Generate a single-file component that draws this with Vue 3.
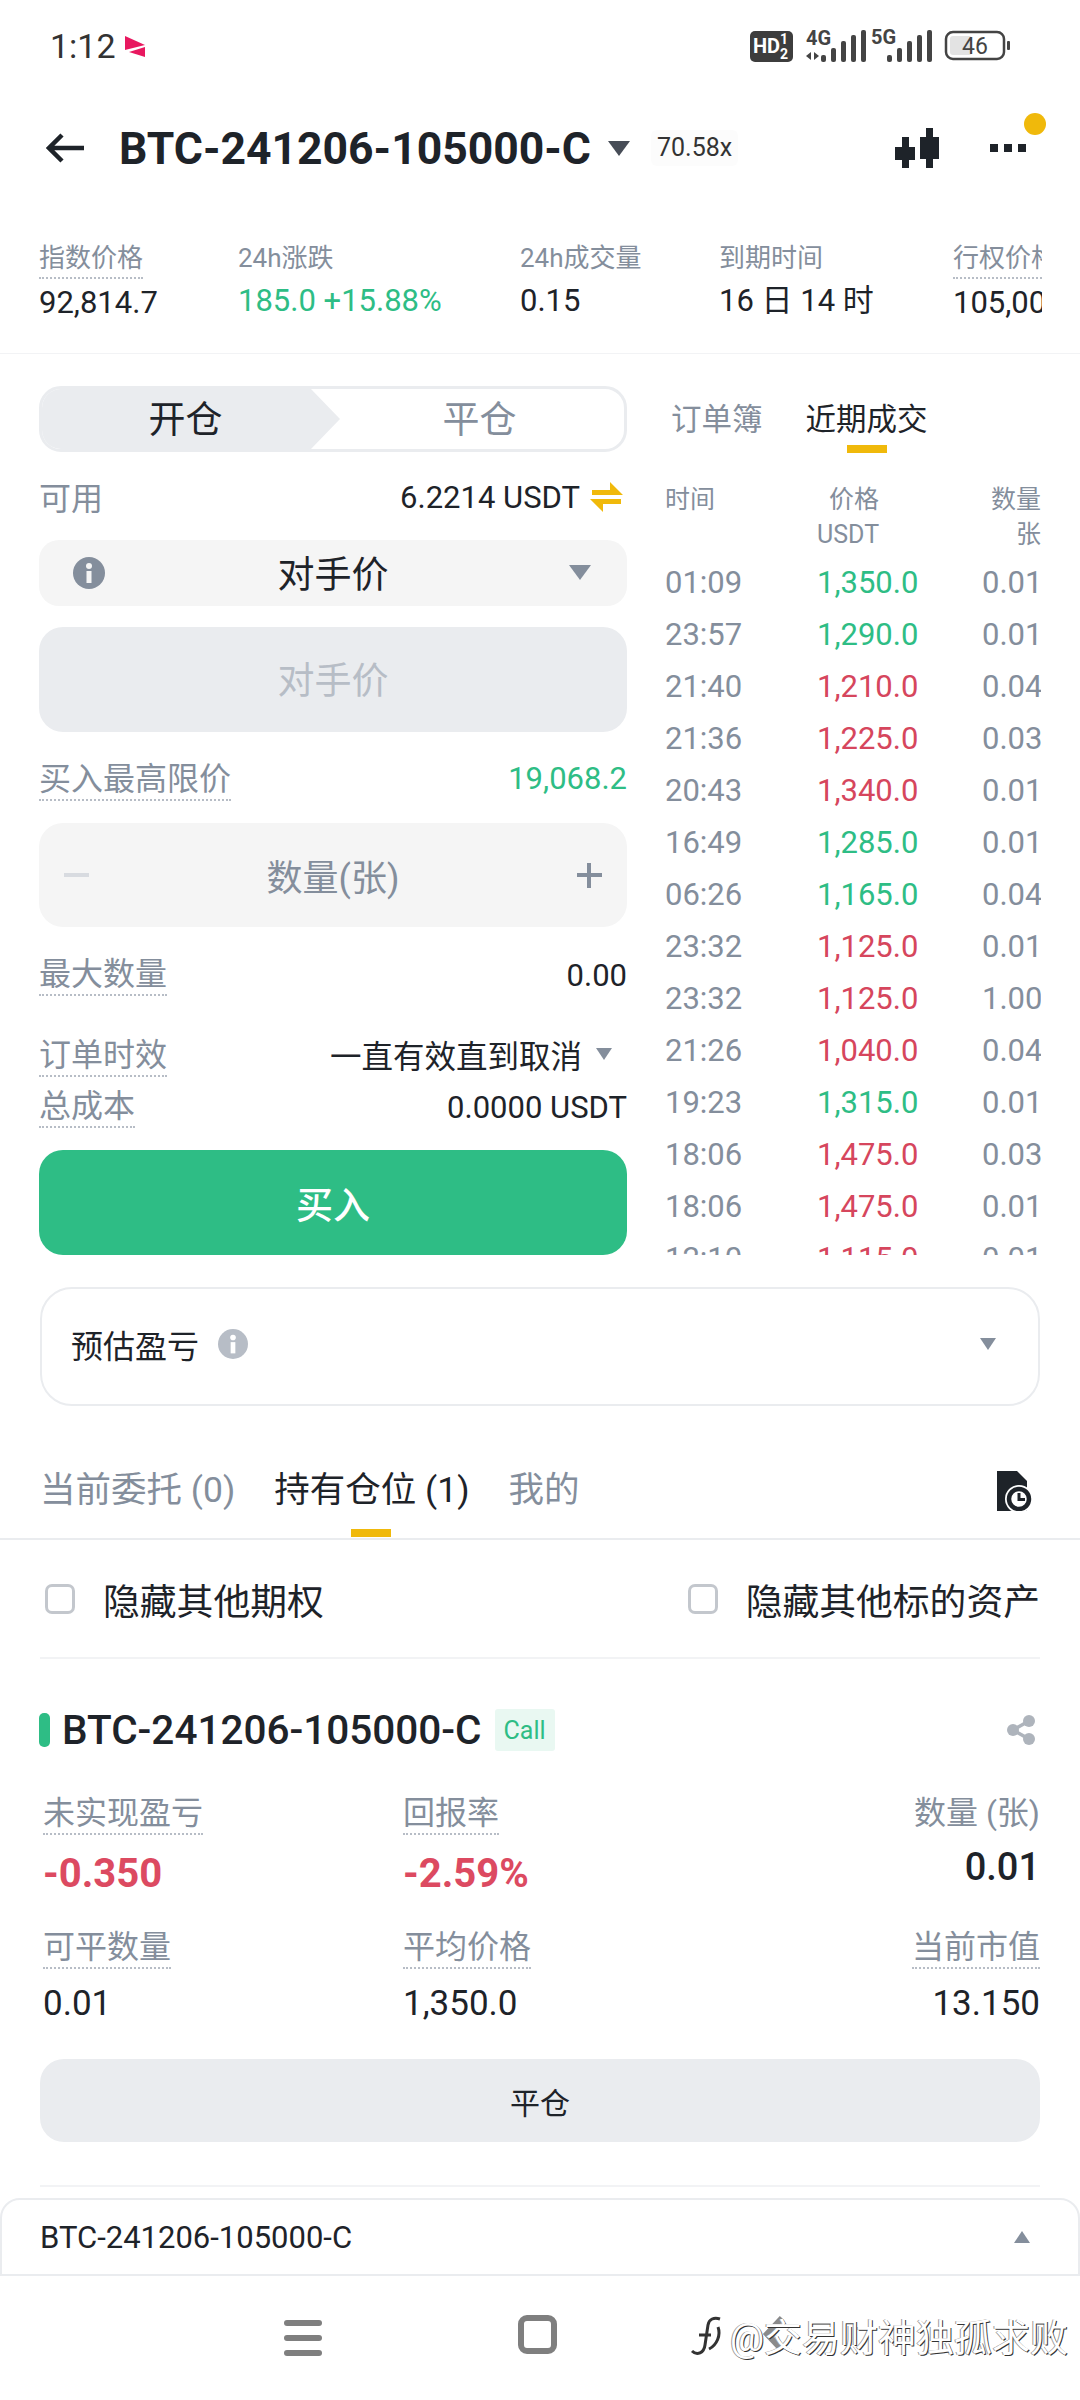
<template>
  <div class="page">
    <div class="status-bar">
      <span class="clock">1:12</span>
      <svg class="app-mark" viewBox="0 0 21 21">
        <path d="M0 0L20 9L0 14Z" fill="#e8185f" />
        <path d="M20 11V21L4 16Z" fill="#e8185f" />
      </svg>
      <svg class="status-icons" viewBox="0 -6 270 46">
        <rect x="0" y="1" width="43" height="31" rx="5" fill="#3d3d3d" />
        <text x="3" y="23" class="hd">HD</text>
        <text x="30" y="14" class="hd-sm">1</text>
        <text x="30" y="29" class="hd-sm">2</text>
        <text x="56" y="15" class="net">4G</text>
        <text x="121" y="14" class="net">5G</text>
        <path d="M56 26l5-4v8zM64 22l5 4-5 4z" fill="#444" />
        <rect v-for="(b, i) in signal" :key="'a' + i" :x="b.x + 71" :y="32 - b.h" width="5" :height="b.h" rx="2" fill="#444" />
        <rect v-for="(b, i) in signal" :key="'b' + i" :x="b.x + 137" :y="32 - b.h" width="5" :height="b.h" rx="2" fill="#444" />
        <rect x="196" y="2" width="58" height="27" rx="7" fill="none" stroke="#444" stroke-width="2.5" />
        <rect x="200" y="6" width="22" height="19" rx="3" fill="#e3e3e3" />
        <text x="212" y="24" class="batt">46</text>
        <rect x="257" y="11" width="3" height="9" rx="1" fill="#444" />
      </svg>
    </div>

    <header class="top-bar">
      <svg class="back" viewBox="0 0 40 32">
        <path d="M38 16H4M16 3L3 16L16 29" fill="none" stroke="#1e2329" stroke-width="4.5" />
      </svg>
      <h1 class="symbol">BTC-241206-105000-C</h1>
      <i class="caret big"></i>
      <span class="leverage">70.58x</span>
      <svg class="candles" viewBox="0 0 46 40">
        <path d="M7 9h7v10h6v13h-6v8H7v-8H0V19h7zM31 0h7v9h6v22h-6v9h-7v-9h-6V9h6z" fill="#1e2329" />
      </svg>
      <div class="more">
        <i></i><i></i><i></i>
        <b class="more-dot"></b>
      </div>
    </header>

    <section class="stats">
      <div class="stats-inner">
        <div v-for="s in stats" :key="s.label" class="stat">
          <span class="stat-label" :class="{ dotted: s.dotted }">{{ s.label }}</span>
          <span class="stat-value" :class="{ up: s.up }">{{ s.value }}</span>
        </div>
      </div>
    </section>

    <section class="trade">
      <div class="form">
        <div class="segment">
          <div class="seg-on">开仓</div>
          <div class="seg-off">平仓</div>
        </div>

        <div class="row avail">
          <span class="label">可用</span>
          <span class="avail-val">
            6.2214 USDT
            <svg class="transfer" viewBox="0 0 33 30">
              <path d="M2 8H20V0L33 13H2ZM31 17H0L13 30V22H31Z" fill="#f0b90b" />
            </svg>
          </span>
        </div>

        <div class="select">
          <svg class="info" viewBox="0 0 32 32">
            <circle cx="16" cy="16" r="16" fill="#848e9c" />
            <rect x="13.5" y="14" width="5" height="12" fill="#f5f5f5" />
            <circle cx="16" cy="9" r="3" fill="#f5f5f5" />
          </svg>
          <span>对手价</span>
          <i class="caret select-caret"></i>
        </div>

        <div class="disabled-input">对手价</div>

        <div class="row limit">
          <span class="label dotted">买入最高限价</span>
          <span class="limit-val">19,068.2</span>
        </div>

        <div class="qty">
          <i class="minus"></i>
          <span>数量(张)</span>
          <i class="plus"></i>
        </div>

        <div class="row max">
          <span class="label dotted">最大数量</span>
          <span class="plain-val">0.00</span>
        </div>

        <div class="row tif">
          <span class="label dotted">订单时效</span>
          <span class="tif-val">一直有效直到取消<i class="caret small"></i></span>
        </div>

        <div class="row cost">
          <span class="label dotted">总成本</span>
          <span class="plain-val">0.0000 USDT</span>
        </div>

        <button class="buy">买入</button>
      </div>

      <div class="book">
        <div class="book-tabs">
          <span>订单簿</span>
          <span class="active">近期成交</span>
        </div>
        <div class="book-head">
          <span class="head-cell">时间</span>
          <span class="head-cell price-head"><em>价格</em>USDT</span>
          <span class="head-cell qty-head">数量<br />张</span>
        </div>
        <div class="book-rows">
          <div v-for="(t, i) in trades" :key="i" class="book-row">
            <span>{{ t[0] }}</span>
            <span :class="t[3] ? 'up' : 'down'">{{ t[1] }}</span>
            <span>{{ t[2] }}</span>
          </div>
        </div>
      </div>
    </section>

    <div class="estimate">
      <span>预估盈亏</span>
      <svg class="info-sm" viewBox="0 0 32 32">
        <circle cx="16" cy="16" r="16" fill="#b7bdc6" />
        <rect x="13.5" y="14" width="5" height="12" fill="#fff" />
        <circle cx="16" cy="9" r="3" fill="#fff" />
      </svg>
      <i class="caret small estimate-caret"></i>
    </div>

    <nav class="tabs">
      <span>当前委托 (0)</span>
      <span class="active">持有仓位 (1)</span>
      <span>我的</span>
      <svg class="history" viewBox="0 0 36 40">
        <path d="M0 0H20L30 10V40H0Z" fill="#1e2329" />
        <circle cx="22" cy="28" r="14" fill="#fff" />
        <circle cx="22" cy="28" r="10" fill="none" stroke="#1e2329" stroke-width="4.5" />
        <path d="M22 22V28.5H28" fill="none" stroke="#1e2329" stroke-width="3" />
      </svg>
    </nav>

    <div class="filters">
      <label class="check"><i></i>隐藏其他期权</label>
      <label class="check"><i></i>隐藏其他标的资产</label>
    </div>

    <section class="position">
      <div class="pos-head">
        <i class="pos-bar"></i>
        <span class="pos-name">BTC-241206-105000-C</span>
        <span class="call">Call</span>
        <svg class="share" viewBox="0 0 28 30">
          <path d="M22 6L6 15L22 24" fill="none" stroke="#aeb4bc" stroke-width="3.5" />
          <circle cx="22" cy="6" r="6" fill="#aeb4bc" />
          <circle cx="6" cy="15" r="6" fill="#aeb4bc" />
          <circle cx="22" cy="24" r="6" fill="#aeb4bc" />
        </svg>
      </div>

      <div class="pos-grid">
        <div class="cell">
          <span class="label dotted">未实现盈亏</span>
          <span class="big-val down">-0.350</span>
        </div>
        <div class="cell">
          <span class="label dotted">回报率</span>
          <span class="big-val down">-2.59%</span>
        </div>
        <div class="cell right">
          <span class="label">数量 (张)</span>
          <span class="big-val dark">0.01</span>
        </div>
        <div class="cell second">
          <span class="label dotted">可平数量</span>
          <span class="mid-val">0.01</span>
        </div>
        <div class="cell second">
          <span class="label dotted">平均价格</span>
          <span class="mid-val">1,350.0</span>
        </div>
        <div class="cell second right">
          <span class="label dotted">当前市值</span>
          <span class="mid-val">13.150</span>
        </div>
      </div>

      <button class="close-btn">平仓</button>
    </section>

    <div class="sheet">
      <span>BTC-241206-105000-C</span>
      <i class="caret small flip"></i>
    </div>

    <div class="nav-bar">
      <div class="burger"><i></i><i></i><i></i></div>
      <div class="square"></div>
      <svg class="nav-back" viewBox="0 0 24 38">
        <path d="M20 3L5 19L20 35" fill="none" stroke="#8a8a8a" stroke-width="6" />
      </svg>
    </div>

    <div class="watermark">
      <svg class="wm-logo" viewBox="0 0 36 50">
        <path d="M4 38c5 5 12 2 13-6L20 12c1-6 6-8 12-6M30 14c3 8-1 18-9 22M11 22h12" fill="none" stroke="#333" stroke-width="3" />
      </svg>
      <span>@交易财神独孤求败</span>
    </div>
  </div>
</template>

<script setup>
const signal = [
  { x: 0, h: 7 },
  { x: 10, h: 14 },
  { x: 20, h: 21 },
  { x: 30, h: 27 },
  { x: 40, h: 32 }
]

const stats = [
  { label: '指数价格', value: '92,814.7', dotted: true },
  { label: '24h涨跌', value: '185.0 +15.88%', up: true },
  { label: '24h成交量', value: '0.15' },
  { label: '到期时间', value: '16 日 14 时' },
  { label: '行权价格', value: '105,000', dotted: true }
]

const trades = [
  ['01:09', '1,350.0', '0.01', true],
  ['23:57', '1,290.0', '0.01', true],
  ['21:40', '1,210.0', '0.04', false],
  ['21:36', '1,225.0', '0.03', false],
  ['20:43', '1,340.0', '0.01', false],
  ['16:49', '1,285.0', '0.01', true],
  ['06:26', '1,165.0', '0.04', true],
  ['23:32', '1,125.0', '0.01', false],
  ['23:32', '1,125.0', '1.00', false],
  ['21:26', '1,040.0', '0.04', false],
  ['19:23', '1,315.0', '0.01', true],
  ['18:06', '1,475.0', '0.03', false],
  ['18:06', '1,475.0', '0.01', false],
  ['12:10', '1,115.0', '0.01', false]
]
</script>

<style>
html, body {
  margin: 0;
  background: #fff;
}
</style>

<style scoped>
.page {
  position: relative;
  width: 1080px;
  height: 2400px;
  overflow: hidden;
  background: #fff;
  color: #1e2329;
  font-family: Roboto, "Noto Sans CJK SC", sans-serif;
}

i {
  display: block;
  font-style: normal;
}

.up { color: #2ebd85; }
.down { color: #dc4a61; }

.caret {
  width: 0;
  height: 0;
  border-left: 11px solid transparent;
  border-right: 11px solid transparent;
  border-top: 15px solid #474d57;
}

.caret.small {
  border-left-width: 8px;
  border-right-width: 8px;
  border-top: 12px solid #848e9c;
}

.caret.flip {
  transform: rotate(180deg);
}

/* status bar */
.status-bar {
  display: flex;
  align-items: center;
  height: 92px;
  padding: 0 68px 0 50px;
  box-sizing: border-box;
}

.clock {
  font-size: 34px;
  color: #333;
}

.app-mark {
  width: 21px;
  height: 21px;
  margin-left: 9px;
}

.status-icons {
  width: 270px;
  height: 46px;
  margin-left: auto;
  margin-top: 2px;
  margin-right: -8px;
}

.hd {
  font: 700 20px Roboto, sans-serif;
  fill: #fff;
}

.hd-sm {
  font: 700 14px Roboto, sans-serif;
  fill: #fff;
}

.net {
  font: 700 20px Roboto, sans-serif;
  fill: #444;
}

.batt {
  font: 400 23px Roboto, sans-serif;
  fill: #444;
}

/* header */
.top-bar {
  display: flex;
  align-items: center;
  height: 112px;
  padding-left: 46px;
}

.back {
  width: 40px;
  height: 32px;
}

.symbol {
  margin: 2px 0 0 33px;
  font-size: 44.5px;
  font-weight: 700;
  line-height: 60px;
  white-space: nowrap;
}

.caret.big {
  margin-left: 17px;
}

.leverage {
  margin-left: 21px;
  padding: 0 6px;
  height: 36px;
  line-height: 36px;
  font-size: 25px;
  color: #333;
  background: #fcfcfc;
  border-radius: 6px;
}

.candles {
  width: 46px;
  height: 40px;
  margin-left: 157px;
}

.more {
  position: relative;
  display: flex;
  gap: 6px;
  margin-left: 49px;
}

.more i {
  width: 8px;
  height: 8px;
  background: #1e2329;
}

.more-dot {
  position: absolute;
  left: 34px;
  top: -31px;
  width: 22px;
  height: 22px;
  border-radius: 50%;
  background: #f0b90b;
}

/* stats */
.stats {
  height: 150px;
  border-bottom: 1px solid #f2f3f5;
  box-sizing: border-box;
}

.stats-inner {
  display: grid;
  grid-template-columns: 199px 282px 199px 234px 89px;
  margin: 0 38px 0 39px;
  padding-top: 36px;
  overflow: hidden;
  white-space: nowrap;
}

.stat-label {
  display: inline-block;
  height: 37px;
  line-height: 36px;
  font-size: 26px;
  color: #848e9c;
}

.stat-value {
  display: block;
  margin-top: 4px;
  line-height: 40px;
  font-size: 31px;
}

.dotted {
  border-bottom: 2px dotted #b7bdc6;
}

/* trade form */
.trade {
  display: flex;
  height: 901px;
  padding: 32px 0 0 39px;
  box-sizing: border-box;
}

.form {
  width: 588px;
  flex: none;
}

.segment {
  display: flex;
  height: 66px;
  box-sizing: border-box;
  border: 3px solid #eaecef;
  border-radius: 22px;
  overflow: hidden;
  font-size: 37px;
}

.seg-on {
  flex: none;
  width: 301px;
  padding-right: 8px;
  box-sizing: border-box;
  margin-left: -3px;
  text-align: center;
  line-height: 64px;
  background: #eaecef;
  clip-path: polygon(0 0, 272px 0, 100% 50%, 272px 100%, 0 100%);
}

.seg-off {
  flex: 1;
  padding-right: 5px;
  text-align: center;
  line-height: 64px;
  color: #848e9c;
}

.row {
  display: flex;
  align-items: center;
  justify-content: space-between;
  height: 44px;
}

.label {
  display: inline-block;
  height: 44px;
  line-height: 48px;
  font-size: 32px;
  color: #848e9c;
  white-space: nowrap;
}

.avail { margin-top: 23px; }
.limit { margin-top: 24px; }
.max { margin-top: 24px; }
.tif { margin-top: 37px; }
.cost { margin-top: 7px; }

.avail-val {
  display: flex;
  align-items: center;
  gap: 10px;
  font-size: 31px;
}

.transfer {
  width: 33px;
  height: 30px;
  margin-right: 4px;
}

.select {
  display: flex;
  align-items: center;
  justify-content: center;
  position: relative;
  height: 66px;
  margin-top: 21px;
  padding-bottom: 2px;
  box-sizing: border-box;
  font-size: 37px;
  background: #f5f5f5;
  border-radius: 20px;
}

.info {
  position: absolute;
  left: 34px;
  top: 17px;
  width: 32px;
  height: 32px;
}

.select-caret {
  position: absolute;
  right: 36px;
  top: 25px;
  border-top-color: #848e9c;
}

.disabled-input {
  height: 105px;
  margin-top: 21px;
  line-height: 109px;
  text-align: center;
  font-size: 37px;
  color: #b7bdc6;
  background: #eaecef;
  border-radius: 24px;
}

.limit-val {
  font-size: 31px;
  color: #2ebd85;
}

.qty {
  display: flex;
  align-items: center;
  justify-content: space-between;
  height: 104px;
  margin-top: 23px;
  padding: 0 25px;
  font-size: 36px;
  color: #848e9c;
  background: #f5f5f5;
  border-radius: 24px;
}

.minus {
  width: 25px;
  height: 4px;
  background: #d8dbe0;
}

.plus {
  position: relative;
  width: 25px;
  height: 4px;
  background: #848e9c;
}

.plus::after {
  content: "";
  position: absolute;
  left: 10.5px;
  top: -10.5px;
  width: 4px;
  height: 25px;
  background: #848e9c;
}

.plain-val {
  padding-top: 4px;
  font-size: 31px;
}

.tif-val {
  display: flex;
  align-items: center;
  font-size: 31.5px;
}

.tif-val .caret {
  margin-left: 14px;
  margin-right: 15px;
}

.buy {
  display: block;
  width: 100%;
  height: 105px;
  margin-top: 23px;
  border: 0;
  border-radius: 24px;
  background: #2ebd85;
  color: #fff;
  font: 500 37px Roboto, "Noto Sans CJK SC", sans-serif;
}

/* recent trades */
.book {
  width: 376px;
  margin-left: 38px;
  flex: none;
}

.book-tabs {
  display: flex;
  gap: 43px;
  padding: 12px 0 0 6px;
  height: 47px;
  font-size: 30.5px;
  line-height: 44px;
  color: #848e9c;
}

.book-tabs .active {
  position: relative;
  color: #1e2329;
}

.book-tabs .active::after {
  content: "";
  position: absolute;
  left: 41px;
  top: 47px;
  width: 40px;
  height: 8px;
  background: #f0b90b;
}

.book-head {
  display: grid;
  grid-template-columns: 152px 165px 1fr;
  height: 112px;
  padding-top: 37px;
  box-sizing: border-box;
  font-size: 25px;
  line-height: 35px;
  color: #848e9c;
}

.head-cell em {
  display: block;
  font-style: normal;
  padding-left: 12px;
}

.qty-head {
  text-align: right;
  grid-column: 3;
}

.book-rows {
  height: 698px;
  overflow: hidden;
}

.book-row {
  display: grid;
  grid-template-columns: 152px 165px 1fr;
  height: 52px;
  line-height: 52px;
  font-size: 31px;
  color: #848e9c;
}

.book-row .up { color: #2ebd85; }
.book-row .down { color: #d6465d; }

/* estimate */
.estimate {
  display: flex;
  align-items: center;
  height: 119px;
  margin: 32px 40px 0;
  padding: 0 42px 5px 29px;
  box-sizing: border-box;
  border: 2px solid #eaecef;
  border-radius: 32px;
  font-size: 32px;
}

.info-sm {
  width: 30px;
  height: 30px;
  margin-left: 19px;
}

.estimate-caret {
  margin-left: auto;
}

/* position tabs */
.tabs {
  display: flex;
  gap: 39px;
  position: relative;
  height: 134px;
  padding: 62px 0 0 40px;
  box-sizing: border-box;
  border-bottom: 2px solid #eaecef;
  font-size: 35.5px;
  line-height: 44px;
  color: #848e9c;
  white-space: nowrap;
}

.tabs .active {
  position: relative;
  color: #1e2329;
}

.tabs .active::after {
  content: "";
  position: absolute;
  left: 77px;
  top: 61px;
  width: 40px;
  height: 8px;
  background: #f0b90b;
}

.history {
  position: absolute;
  left: 997px;
  top: 65px;
  width: 36px;
  height: 40px;
}

.filters {
  display: flex;
  align-items: center;
  justify-content: space-between;
  height: 119px;
  margin: 0 40px;
  border-bottom: 2px solid #f2f3f5;
  box-sizing: border-box;
  font-size: 36.8px;
}

.check {
  display: flex;
  align-items: center;
}

.check i {
  width: 30px;
  height: 30px;
  margin: 0 28px 0 5px;
  box-sizing: border-box;
  border: 3px solid #c3c7cd;
  border-radius: 7px;
}

/* position card */
.position {
  margin: 0 40px;
}

.pos-head {
  display: flex;
  align-items: center;
  height: 130px;
  padding-top: 42px;
  padding-bottom: 30px;
  box-sizing: border-box;
}

.pos-bar {
  width: 11px;
  height: 34px;
  margin-left: -1px;
  background: #2ebd85;
  border-radius: 5px;
}

.pos-name {
  margin-left: 12px;
  font-size: 40.5px;
  font-weight: 500;
  white-space: nowrap;
}

.call {
  margin-left: 13px;
  padding: 0 9px;
  height: 42px;
  line-height: 44px;
  font-size: 25px;
  color: #2ebd85;
  background: #e9f8f2;
  border-radius: 3px;
}

.share {
  width: 28px;
  height: 30px;
  margin-left: auto;
  margin-right: 5px;
}

.pos-grid {
  display: grid;
  grid-template-columns: 360px 368px 1fr;
}

.cell {
  display: flex;
  flex-direction: column;
  align-items: flex-start;
  padding-left: 3px;
}

.cell.right {
  align-items: flex-end;
}

.cell.second {
  margin-top: 24px;
}

.big-val {
  height: 50px;
  margin-top: 14px;
  line-height: 50px;
  font-size: 40px;
  font-weight: 700;
}

.big-val.dark {
  color: #1e2329;
  line-height: 40px;
  font-size: 38px;
  font-weight: 500;
}

.mid-val {
  height: 50px;
  margin-top: 10px;
  line-height: 50px;
  font-size: 35px;
}

.close-btn {
  display: block;
  width: 100%;
  height: 83px;
  margin: 30px 0 56px;
  padding: 0;
  border: 0;
  border-radius: 24px;
  background: #eaecef;
  color: #1e2329;
  font: 400 30px Roboto, "Noto Sans CJK SC", sans-serif;
}

/* bottom sheet */
.sheet {
  display: flex;
  align-items: center;
  justify-content: space-between;
  height: 78px;
  padding: 0 48px 0 38px;
  box-sizing: border-box;
  border: 2px solid #eaecef;
  border-radius: 20px 20px 0 0;
  font-size: 31px;
  position: relative;
}

.sheet::before {
  content: "";
  position: absolute;
  left: 38px;
  right: 38px;
  top: -15px;
  height: 2px;
  background: #f2f3f5;
}

/* system nav */
.nav-bar {
  position: relative;
  height: 125px;
}

.burger {
  position: absolute;
  left: 284px;
  top: 44px;
  display: flex;
  flex-direction: column;
  gap: 9px;
}

.burger i {
  width: 38px;
  height: 6px;
  border-radius: 3px;
  background: #7f7f7f;
}

.square {
  position: absolute;
  left: 518px;
  top: 39px;
  width: 39px;
  height: 39px;
  box-sizing: border-box;
  border: 6px solid #7f7f7f;
  border-radius: 9px;
}

.nav-back {
  position: absolute;
  left: 762px;
  top: 39px;
  width: 24px;
  height: 38px;
}

.watermark {
  position: absolute;
  left: 688px;
  top: 2312px;
  display: flex;
  align-items: center;
  gap: 6px;
  font-size: 38px;
  line-height: 52px;
  color: #fff;
  white-space: nowrap;
  text-shadow: 1px 1px 0 #333, -1px 0 0 #999;
}

.wm-logo {
  width: 36px;
  height: 50px;
}
</style>
